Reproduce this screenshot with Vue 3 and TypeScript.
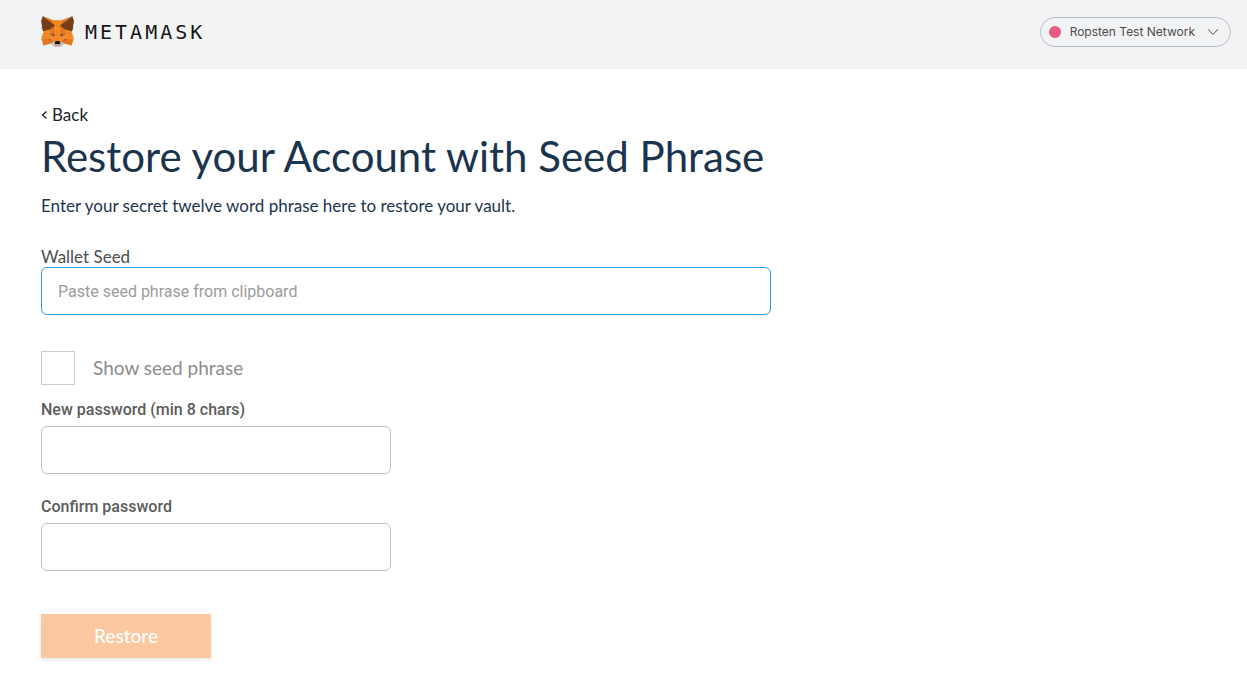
<script setup lang="ts">
import { ref } from 'vue'

interface Facet {
  fill: string
  points: string
}

const foxFacets: Facet[] = [
  { fill: '#e2761b', points: '274.1,35.5 174.6,109.4 193,65.8' },
  { fill: '#e4761b', points: '44.4,35.5 143.1,110.1 125.6,65.8' },
  { fill: '#e4761b', points: '238.3,206.8 211.8,247.4 268.5,263 284.8,207.7' },
  { fill: '#e4761b', points: '33.9,207.7 50.1,263 106.8,247.4 80.3,206.8' },
  { fill: '#e4761b', points: '103.6,138.2 87.8,162.1 144.1,164.6 142.1,104.1' },
  { fill: '#e4761b', points: '214.9,138.2 175.9,103.4 174.6,164.6 230.8,162.1' },
  { fill: '#e4761b', points: '106.8,247.4 140.6,230.9 111.4,208.1' },
  { fill: '#e4761b', points: '177.9,230.9 211.8,247.4 207.1,208.1' },
  { fill: '#d7c1b3', points: '211.8,247.4 177.9,230.9 180.6,253 180.3,262.3' },
  { fill: '#d7c1b3', points: '106.8,247.4 138.3,262.3 138.1,253 140.6,230.9' },
  { fill: '#233447', points: '138.8,193.5 110.6,185.2 130.5,176.1' },
  { fill: '#233447', points: '179.7,193.5 188,176.1 208,185.2' },
  { fill: '#cd6116', points: '106.8,247.4 111.6,206.8 80.3,207.7' },
  { fill: '#cd6116', points: '207,206.8 211.8,247.4 238.3,207.7' },
  { fill: '#cd6116', points: '230.8,162.1 174.6,164.6 179.8,193.5 188.1,176.1 208.1,185.2' },
  { fill: '#cd6116', points: '110.6,185.2 130.6,176.1 138.8,193.5 144.1,164.6 87.8,162.1' },
  { fill: '#e4751f', points: '87.8,162.1 111.4,208.1 110.6,185.2' },
  { fill: '#e4751f', points: '208.1,185.2 207.1,208.1 230.8,162.1' },
  { fill: '#e4751f', points: '144.1,164.6 138.8,193.5 145.4,227.6 146.9,182.7' },
  { fill: '#e4751f', points: '174.6,164.6 171.9,182.6 173.1,227.6 179.8,193.5' },
  { fill: '#f6851b', points: '179.8,193.5 173.1,227.6 177.9,230.9 207.1,208.1 208.1,185.2' },
  { fill: '#f6851b', points: '110.6,185.2 111.4,208.1 140.6,230.9 145.4,227.6 138.8,193.5' },
  { fill: '#c0ad9e', points: '180.3,262.3 180.6,253 178.1,250.8 140.4,250.8 138.1,253 138.3,262.3 106.8,247.4 117.8,256.4 140.1,271.9 178.4,271.9 200.8,256.4 211.8,247.4' },
  { fill: '#161616', points: '177.9,230.9 173.1,227.6 145.4,227.6 140.6,230.9 138.1,253 140.4,250.8 178.1,250.8 180.6,253' },
  { fill: '#763d16', points: '278.3,114.2 286.8,73.4 274.1,35.5 177.9,106.9 214.9,138.2 267.2,153.5 278.8,140 273.8,136.4 281.8,129.1 275.6,124.3 283.6,118.2' },
  { fill: '#763d16', points: '31.8,73.4 40.3,114.2 34.9,118.2 42.9,124.3 36.8,129.1 44.8,136.4 39.8,140 51.3,153.5 103.6,138.2 140.6,106.9 44.4,35.5' },
  { fill: '#f6851b', points: '267.2,153.5 214.9,138.2 230.8,162.1 207.1,208.1 238.3,207.7 284.8,207.7' },
  { fill: '#f6851b', points: '103.6,138.2 51.3,153.5 33.9,207.7 80.3,207.7 111.4,208.1 87.8,162.1' },
  { fill: '#f6851b', points: '174.6,164.6 177.9,106.9 193.1,65.8 125.6,65.8 140.6,106.9 144.1,164.6 145.3,182.8 145.4,227.6 173.1,227.6 173.3,182.8' },
]

const seed = ref('')
const showSeed = ref(false)
const password = ref('')
const confirmation = ref('')
</script>

<template>
  <header class="app-header">
    <a class="brand" href="#">
      <svg class="fox" viewBox="31 35 256 237" aria-hidden="true">
        <polygon v-for="(facet, i) in foxFacets" :key="i" :points="facet.points" :fill="facet.fill" :stroke="facet.fill" />
      </svg>
      <span class="wordmark">METAMASK</span>
    </a>
    <button class="network" type="button">
      <span class="network-dot"></span>
      <span class="network-name">Ropsten Test Network</span>
      <svg class="chevron" viewBox="0 0 12 8" aria-hidden="true">
        <path d="M1 1.2 6 6.4 11 1.2" />
      </svg>
    </button>
  </header>

  <main class="page">
    <a class="back" href="#">
      <svg class="back-arrow" viewBox="0 0 7 10" aria-hidden="true">
        <path d="M5.5 1.5 1.5 5l4 3.5" />
      </svg>
      <span>Back</span>
    </a>
    <h1 class="title">Restore your Account with Seed Phrase</h1>
    <p class="intro">Enter your secret twelve word phrase here to restore your vault.</p>

    <form @submit.prevent>
      <div class="seed-field">
        <label class="seed-label" for="seed">Wallet Seed</label>
        <input
          id="seed"
          v-model="seed"
          class="input input-active"
          :type="showSeed ? 'text' : 'password'"
          placeholder="Paste seed phrase from clipboard"
          autocomplete="off"
        />
      </div>

      <div class="show-seed">
        <input id="show-seed" v-model="showSeed" class="checkbox" type="checkbox" />
        <label for="show-seed">Show seed phrase</label>
      </div>

      <div class="password-field">
        <label for="password">New password (min 8 chars)</label>
        <input id="password" v-model="password" class="input" type="password" autocomplete="new-password" />
      </div>
      <div class="password-field">
        <label for="confirmation">Confirm password</label>
        <input id="confirmation" v-model="confirmation" class="input" type="password" autocomplete="new-password" />
      </div>

      <button class="restore" type="submit" disabled>Restore</button>
    </form>
  </main>
</template>

<style>
body {
  margin: 0;
  background: #fff;
}
</style>

<style scoped>
* {
  box-sizing: border-box;
}

.app-header {
  display: flex;
  align-items: flex-start;
  justify-content: space-between;
  padding: 16px 16px 22px 41px;
  background: #f2f3f4;
  font-family: Lato, sans-serif;
}

.brand {
  display: flex;
  align-items: center;
  gap: 11px;
  color: #161616;
  text-decoration: none;
}

.fox {
  display: block;
  width: 33px;
  height: 31px;
}

.wordmark {
  font-family: "DejaVu Sans Mono", monospace;
  font-size: 20px;
  line-height: 30px;
  letter-spacing: 3px;
}

.network {
  display: flex;
  align-items: center;
  height: 30px;
  margin-top: 1px;
  padding: 0 11px 0 8px;
  border: 1px solid #bbc0c5;
  border-radius: 15px;
  background: transparent;
  color: #4d4d4d;
  font: 400 12px/18px Inter, sans-serif;
}

.network-dot {
  width: 12px;
  height: 12px;
  border-radius: 50%;
  background: #e95a83;
}

.network-name {
  margin: 0 12px 0 9px;
}

.chevron {
  width: 12px;
  height: 8px;
  fill: none;
  stroke: #4d4d4d;
}

.page {
  max-width: 812px;
  padding: 35px 41px 40px;
  font-family: Lato, sans-serif;
}

.back {
  display: flex;
  align-items: center;
  gap: 4px;
  width: max-content;
  color: #22232c;
  font-size: 17px;
  line-height: 22px;
  text-decoration: none;
}

.back-arrow {
  width: 7px;
  height: 10px;
  fill: none;
  stroke: #22232c;
  stroke-width: 1.4;
}

.title {
  margin: 4px 0 0;
  color: #1b344d;
  font-size: 42px;
  font-weight: 400;
  line-height: 52px;
  white-space: nowrap;
}

.intro {
  margin: 13px 0 0;
  color: #1b344d;
  font-size: 17px;
  line-height: 22px;
}

.seed-field {
  display: flex;
  flex-direction: column;
  margin-top: 30px;
}

.seed-label {
  color: #4d4d4d;
  font-size: 17px;
  line-height: 20px;
}

.input {
  width: 100%;
  height: 48px;
  padding: 0 16px;
  border: 1px solid #bbc0c5;
  border-radius: 6px;
  outline: none;
  background: #fff;
  color: #4d4d4d;
  font: 400 16px/20px Roboto, sans-serif;
}

.input::placeholder {
  color: #9b9b9b;
  opacity: 1;
}

.input-active {
  border-color: #2f9ae0;
}

.show-seed {
  display: flex;
  align-items: center;
  gap: 18px;
  margin-top: 36px;
  color: #8c8c8c;
  font-size: 19px;
  line-height: 24px;
}

.checkbox {
  width: 34px;
  height: 34px;
  margin: 0;
  border: 1px solid #cdcdcd;
  background: #fff;
  appearance: none;
}

.checkbox:checked {
  background: #9b9b9b;
}

.password-field {
  display: flex;
  flex-direction: column;
  gap: 6px;
  max-width: 350px;
  margin-top: 23px;
  color: #5b5b5b;
  font: 500 16px/20px Roboto, sans-serif;
}

.show-seed + .password-field {
  margin-top: 15px;
}

.restore {
  display: block;
  width: 170px;
  height: 44px;
  margin-top: 43px;
  padding: 0;
  border: 0;
  background: #fbc7a0;
  box-shadow: 0 2px 4px rgba(0, 0, 0, 0.1);
  color: #fff;
  font: 500 19px/24px Lato, sans-serif;
}
</style>
